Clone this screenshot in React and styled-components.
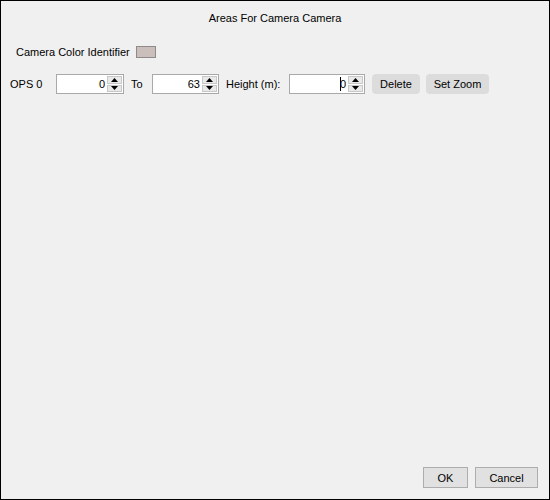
import React from 'react';
import styled, { createGlobalStyle } from 'styled-components';

const GlobalStyle = createGlobalStyle`
	html, body {
		margin: 0;
		padding: 0;
		background: #f0f0f0;
	}
	body {
		font-family: "Liberation Sans", Arial, sans-serif;
		font-size: 11px;
		color: #000;
	}
`;

const Frame = styled.div`
	width: 550px;
	height: 500px;
	box-sizing: border-box;
	border: 1px solid #000;
	background: #f0f0f0;
	display: flex;
	flex-direction: column;
`;

const Title = styled.div`
	padding-top: 10px;
	line-height: 14px;
	text-align: center;
`;

const ColorRow = styled.div`
	margin-top: 20px;
	padding-left: 15px;
	display: flex;
	align-items: center;
	gap: 6px;
	height: 14px;
`;

const Swatch = styled.div`
	width: 18px;
	height: 10px;
	border: 1px solid #8e8a89;
	background: ${p => p.color};
`;

const FieldRow = styled.div`
	margin-top: 15px;
	padding-left: 9px;
	display: flex;
	align-items: center;
	gap: 7px;
	height: 20px;
`;

const Label = styled.span`
	width: ${p => p.w}px;
	white-space: nowrap;
`;

const SpinBox = styled.div`
	width: ${p => p.w}px;
	height: 20px;
	box-sizing: border-box;
	border: 1px solid #a9a9a9;
	background: #fff;
	display: flex;
	align-items: stretch;
`;

const SpinText = styled.div`
	flex: 1;
	display: flex;
	align-items: center;
	justify-content: flex-end;
	padding-right: 2px;
`;

const Caret = styled.span`
	display: inline-block;
	width: 1px;
	height: 14px;
	background: #000;
	margin-right: -1px;
`;

const SpinArrows = styled.div`
	width: 15px;
	margin: 1px 1px 1px 0;
	display: flex;
	flex-direction: column;
	gap: 1px;
`;

const Arrow = styled.div`
	flex: 1;
	background: #e9e9e9;
	border: 1px solid #c8c8c8;
	display: flex;
	align-items: center;
	justify-content: center;
	svg { display: block; }
`;

const RoundButton = styled.div`
	width: ${p => p.w}px;
	height: 20px;
	margin-left: ${p => p.ml || 0}px;
	border-radius: 4px;
	background: #dcdcdc;
	display: flex;
	align-items: center;
	justify-content: center;
`;

const Footer = styled.div`
	margin-top: auto;
	padding: 0 11px 11px 0;
	display: flex;
	justify-content: flex-end;
	gap: 7px;
`;

const DialogButton = styled.div`
	width: ${p => p.w}px;
	height: 21px;
	box-sizing: border-box;
	border: 1px solid #adadad;
	background: #e1e1e1;
	display: flex;
	align-items: center;
	justify-content: center;
`;

const Spinner = ({ w, value, focused }) => (
	<SpinBox w={w}>
		<SpinText>
			{focused && <Caret />}
			{value}
		</SpinText>
		<SpinArrows>
			<Arrow>
				<svg width="7" height="4" viewBox="0 0 7 4"><path d="M0 4 L3.5 0 L7 4 Z" fill="#000" /></svg>
			</Arrow>
			<Arrow>
				<svg width="7" height="4" viewBox="0 0 7 4"><path d="M0 0 L3.5 4 L7 0 Z" fill="#000" /></svg>
			</Arrow>
		</SpinArrows>
	</SpinBox>
);

export default function App() {
	return (
		<>
			<GlobalStyle />
			<Frame>
				<Title>Areas For Camera Camera</Title>
				<ColorRow>
					<span>Camera Color Identifier</span>
					<Swatch color="#cbbfbc" />
				</ColorRow>
				<FieldRow>
					<Label w={39}>OPS 0</Label>
					<Spinner w={68} value="0" />
					<Label w={14}>To</Label>
					<Spinner w={67} value="63" />
					<Label w={56}>Height (m):</Label>
					<Spinner w={76} value="0" focused />
					<RoundButton w={48}>Delete</RoundButton>
					<RoundButton w={63} ml={-1}>Set Zoom</RoundButton>
				</FieldRow>
				<Footer>
					<DialogButton w={45}>OK</DialogButton>
					<DialogButton w={63}>Cancel</DialogButton>
				</Footer>
			</Frame>
		</>
	);
}
